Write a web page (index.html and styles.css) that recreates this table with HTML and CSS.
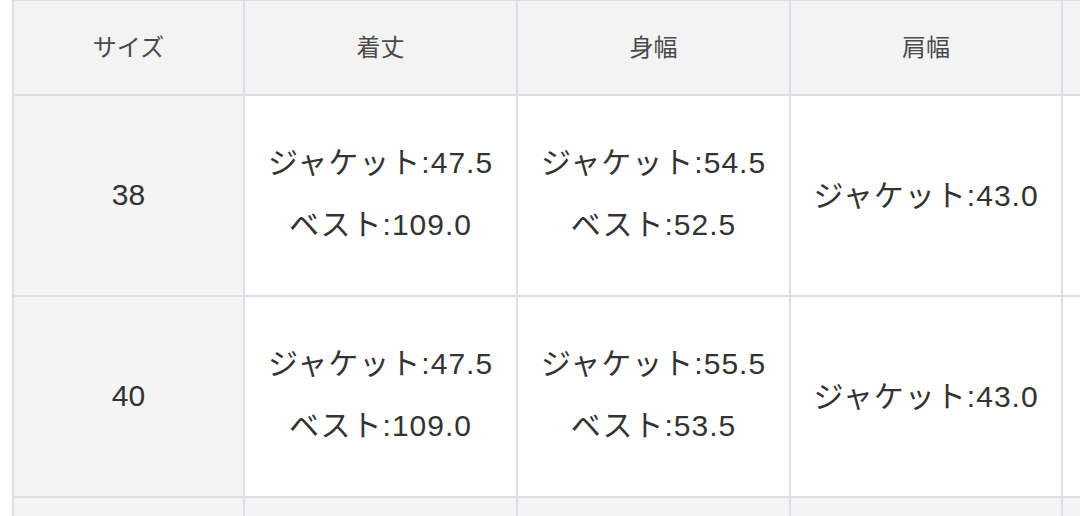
FILE: index.html
```html
<!DOCTYPE html>
<html lang="ja">
<head>
<meta charset="utf-8">
<title>サイズ表</title>
<link rel="stylesheet" href="styles.css">
</head>
<body>
<table class="size-table">
  <colgroup>
    <col class="c1"><col class="c2"><col class="c3"><col class="c4"><col class="c5">
  </colgroup>
  <thead>
    <tr class="head-row">
      <th>サイズ</th>
      <th>着丈</th>
      <th>身幅</th>
      <th>肩幅</th>
      <th></th>
    </tr>
  </thead>
  <tbody>
    <tr class="body-row">
      <td class="size">38</td>
      <td><div class="line">ジャケット:47.5</div><div class="line">ベスト:109.0</div></td>
      <td><div class="line">ジャケット:54.5</div><div class="line">ベスト:52.5</div></td>
      <td><div class="line">ジャケット:43.0</div></td>
      <td></td>
    </tr>
    <tr class="body-row">
      <td class="size">40</td>
      <td><div class="line">ジャケット:47.5</div><div class="line">ベスト:109.0</div></td>
      <td><div class="line">ジャケット:55.5</div><div class="line">ベスト:53.5</div></td>
      <td><div class="line">ジャケット:43.0</div></td>
      <td></td>
    </tr>
    <tr class="next-row">
      <td></td><td></td><td></td><td></td><td></td>
    </tr>
  </tbody>
</table>
</body>
</html>
```

FILE: styles.css
```css
html, body {
  margin: 0;
  padding: 0;
  background: #ffffff;
  overflow: hidden;
  width: 1080px;
  height: 516px;
}

.size-table {
  margin: -1px 0 0 12px;
  border-collapse: collapse;
  table-layout: fixed;
  width: 1350px;
  font-family: "Liberation Sans", "Noto Sans CJK JP", sans-serif;
  color: #333333;
}

.c1 { width: 231px; }
.c2 { width: 273px; }
.c3 { width: 273px; }
.c4 { width: 272px; }
.c5 { width: 301px; }

.size-table th,
.size-table td {
  border: 2px solid #dedfe5;
  text-align: center;
  vertical-align: middle;
  padding: 0;
}

.head-row th {
  height: 88px;
  padding-bottom: 5px;
  background: #f3f3f3;
  font-family: "Noto Sans CJK JP", sans-serif;
  font-weight: 400;
  font-size: 24px;
  color: #4a4a4a;
}

.body-row td {
  height: 195px;
  background: #ffffff;
  font-size: 30px;
}

.body-row td.size {
  background: #f4f4f4;
  padding-bottom: 2px;
}

.line {
  line-height: 62px;
  white-space: nowrap;
  letter-spacing: 1px;
}

.body-row td:nth-child(2),
.body-row td:nth-child(3) {
  padding-bottom: 4px;
}

.next-row td {
  height: 60px;
  background: #f4f4f4;
}
```
